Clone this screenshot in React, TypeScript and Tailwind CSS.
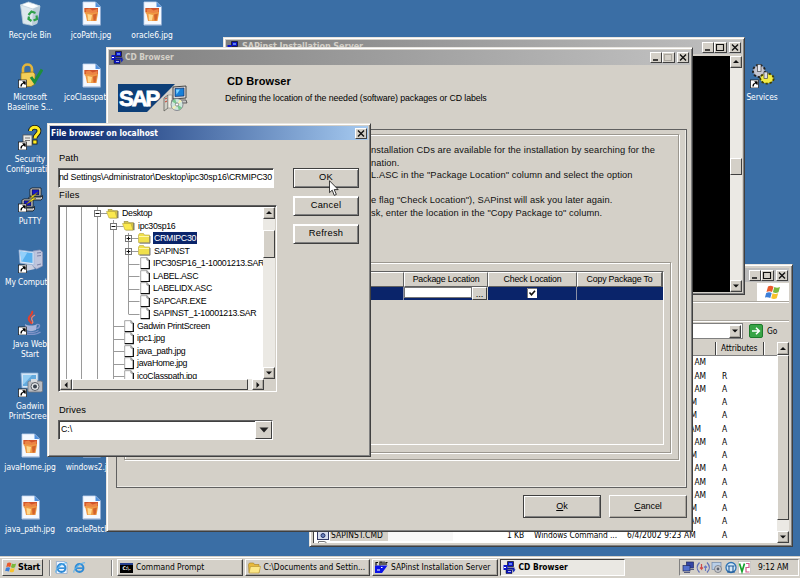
import React from "react";

const UI = "font-['DejaVu_Sans_Condensed','Noto_Sans',sans-serif] text-[8.4px] tracking-[-0.07px]";
const JAVA = "font-['Liberation_Sans',Arial,sans-serif] text-[9.3px]";
const RAISED = "border border-t-white border-l-white border-b-[#404040] border-r-[#404040] bg-[#d4d0c8]";
const ETCHED = "border border-[#9b978f] shadow-[1px_1px_0_#fff,inset_1px_1px_0_#fff]";

/* ---------- icons ---------- */

const Shortcut = () => (
  <g>
    <rect x="0.5" y="17" width="8" height="8" fill="#fff" stroke="#111" strokeWidth="0.7" />
    <path d="M2.4 23.6c0-2.4.9-3.5 2.6-3.6v-1.5h2.4v3.1h-1v-1.1c-1.700.1-2.600 1.200-2.600 3.100z" fill="#000" />
    <path d="M4 18.500h3.500V22z" fill="#000" />
  </g>
);

const JpgIcon = () => (
  <svg viewBox="0 0 25 25" className="size-[25px]">
    <path d="M4 1h12.500l5 5v18H4z" fill="#f5f9ff" stroke="#c3d6f0" strokeWidth="0.8" />
    <path d="M16.500 1l5 5h-5z" fill="#4f8fdc" />
    <path d="M21.500 6v18H4.500" fill="none" stroke="#88a5cc" strokeWidth="0.8" />
    <path d="M5.500 7h13.500v5l-1.500 8H8L6.500 13l-1-1z" fill="#ef9a45" />
    <path d="M5.500 7H19v4H5.500z" fill="#d0532c" />
    <path d="M6.500 8.500l4-1 3 2 5-1.500v3l-5 1-6.500-1z" fill="#ec8444" />
    <path d="M8.500 13l4.500 1-1 5.500H9z" fill="#ffd98c" />
    <path d="M14 13.500l4-1-1.500 7h-2z" fill="#d4632c" />
  </svg>
);

const RecycleIcon = () => (
  <svg viewBox="0 0 25 25" className="size-[25px]">
    <path d="M2.500 4l19.500 1-3 17.500-5 2-9-2z" fill="#dde8ee" stroke="#b6c9d6" strokeWidth="0.8" />
    <path d="M2.500 4l8-3 11.500 4-7 3z" fill="#f7fbfd" stroke="#c2d0da" strokeWidth="0.800" />
    <path d="M15 8l7-3-3 17.500-5 2z" fill="#bccdd8" />
    <path d="M5 3.500l5-1.500 3 2 3-1 2 2-4 2z" fill="#fff" />
    <path d="M10.500 14l3-3.500 4 1.500M18.500 14.500l.5 3.500-3.500 1.500M13.500 20l-3-2 .500-2.500" fill="none" stroke="#2fa04a" strokeWidth="2.200" />
  </svg>
);

const BaselineIcon = () => (
  <svg viewBox="0 0 25 25" className="size-[25px]">
    <path d="M5 11V6c0-6 9-6 9 0v5" fill="none" stroke="#e3b53b" strokeWidth="2.600" />
    <path d="M3 10l12-1 2 2v10l-4 2.500H3z" fill="#f3cf58" stroke="#9a7719" strokeWidth="0.700" />
    <path d="M13 14l3.500 5L24 6.500" fill="none" stroke="#1e8d3b" strokeWidth="3" />
    <Shortcut />
  </svg>
);

const SecurityIcon = () => (
  <svg viewBox="0 0 25 25" className="size-[25px]">
    <rect x="5" y="10" width="9" height="11" fill="#e9e9e4" stroke="#555" strokeWidth="0.800" />
    <path d="M7 13h5M7 15.500h5" stroke="#777" />
    <path d="M12.500 6c0-5 8.500-5 8.500 0 0 3.500-4 3.500-4 7.500" fill="none" stroke="#111" strokeWidth="4.600" />
    <path d="M12.500 6c0-5 8.500-5 8.500 0 0 3.500-4 3.500-4 7.500" fill="none" stroke="#ffed21" strokeWidth="3" />
    <rect x="14.800" y="15" width="4.200" height="4" fill="#ffed21" stroke="#111" strokeWidth="0.800" />
    <Shortcut />
  </svg>
);

const Pc = ({ x, y }: { x: number; y: number }) => (
  <g transform={`translate(${x} ${y})`}>
    <path d="M0 1l2-1h9v8H0z" fill="#d6d6d6" stroke="#111" strokeWidth="0.800" />
    <rect x="2" y="1.800" width="7" height="5" fill="#1616c8" stroke="#111" strokeWidth="0.600" />
    <path d="M-1 9h12l1.500-1.500v3L11 12H-1z" fill="#c3c3c3" stroke="#111" strokeWidth="0.800" />
  </g>
);

const PuttyIcon = () => (
  <svg viewBox="0 0 25 25" className="size-[25px]">
    <Pc x={12} y={1} />
    <Pc x={4} y={12} />
    <path d="M20 5l-8 5.500 3 .500-8 7 11-6.500-3.500-.5z" fill="#ffe928" stroke="#5e5600" strokeWidth="0.500" />
    <Shortcut />
  </svg>
);

const ComputerIcon = () => (
  <svg viewBox="0 0 25 25" className="size-[25px]">
    <path d="M15 3l7-1 2.500 2v14l-6 3-4-3z" fill="#bfc5dc" stroke="#9097b8" strokeWidth="0.700" />
    <path d="M19 5l4-.500M19 8l4-.500M19 17l4-1" stroke="#7b82a8" />
    <path d="M1 2l15 2v13L2 15z" fill="#d7e4f5" stroke="#9eb6d8" strokeWidth="0.700" />
    <path d="M2.300 3.500l12.200 1.600v10L3.300 13.500z" fill="#57b0ee" />
    <path d="M2.300 3.500l7 1-5 8.500-1 .500z" fill="#93d0fa" />
    <path d="M7 16l7 1 3 4-9 2-3-3z" fill="#c9cfdf" />
    <Shortcut />
  </svg>
);

const JavaIcon = () => (
  <svg viewBox="0 0 25 25" className="size-[25px]">
    <path d="M14 1c2 4-5 5-3 9 1 2 3 2 2 4" fill="none" stroke="#e0402e" strokeWidth="2" />
    <path d="M17 5c-4 2-4 4-2.500 6 1 1.500-.5 2.500-.5 2.500" fill="none" stroke="#f0816c" strokeWidth="1.300" />
    <path d="M7 14c3 2 9 2 12 0l-1 6c-3 1.500-7 1.500-10 0z" fill="#a8b5db" />
    <path d="M19 14.500c4-1 3 4-1 4M6 20.500c5 3 11 2.500 14.500 0M8 24c6 1 11 .500 14.500-2" fill="none" stroke="#8193c8" strokeWidth="1.400" />
    <Shortcut />
  </svg>
);

const GadwinIcon = () => (
  <svg viewBox="0 0 25 25" className="size-[25px]">
    <path d="M3 1h17v15H4z" fill="#d5e6f7" stroke="#83a9cf" strokeWidth="0.800" />
    <path d="M5 3h13v11H5z" fill="#63aade" />
    <path d="M5 3h9l-8 9H5z" fill="#94cdf2" />
    <rect x="10" y="9" width="14.500" height="11" rx="1.500" fill="#b9bcc2" stroke="#70747c" strokeWidth="0.800" />
    <rect x="13" y="7" width="6" height="3" fill="#d7dade" />
    <circle cx="17" cy="14.500" r="4" fill="#e4e7ea" stroke="#5d6168" />
    <circle cx="17" cy="14.500" r="2" fill="#39424e" />
    <Shortcut />
  </svg>
);

const ServicesIcon = () => (
  <svg viewBox="0 0 25 25" className="size-[25px]">
    <circle cx="9" cy="8" r="6" fill="#a9a9b4" stroke="#222" strokeWidth="2" strokeDasharray="2.300 1.800" />
    <circle cx="9" cy="8" r="4.800" fill="#c6c6d0" />
    <rect x="7.500" y="1.500" width="3.500" height="7" fill="#e8e8ee" stroke="#444" strokeWidth="0.700" />
    <ellipse cx="17" cy="15.500" rx="6.600" ry="5" fill="#e8e238" stroke="#444000" strokeWidth="2" strokeDasharray="2.300 1.800" />
    <ellipse cx="17" cy="15.500" rx="5.600" ry="4" fill="#f2ec45" />
    <rect x="14" y="9" width="3.600" height="6.500" fill="#dedee4" stroke="#444" strokeWidth="0.700" />
    <Shortcut />
  </svg>
);

const SapinstIcon = () => (
  <svg viewBox="0 0 13 13" className="size-[13px] shrink-0">
    <path d="M4.500 0.500h6v5h-6z" fill="#0a14c8" stroke="#111" strokeWidth="0.700" />
    <path d="M6 2h3v2H6z" fill="#5c7cf0" />
    <path d="M3.500 6.500h8v2h-8z" fill="#111a90" />
    <path d="M0.500 4h4v5h-4z" fill="#0a14c8" />
    <path d="M1 6h2v1H1z" fill="#fff" />
    <path d="M3 9h6v3.500H3z" fill="#0a14c8" stroke="#111" strokeWidth="0.500" />
    <path d="M9 7.500l3.500 1-2 3z" fill="#1b2bb8" />
    <path d="M5 10.500h3" stroke="#cfd6ff" strokeWidth="0.800" />
  </svg>
);

const SapTaskIcon = () => (
  <svg viewBox="0 0 13 13" className="size-[13px] shrink-0">
    <path d="M0 4.500h12.500L7 12H0z" fill="#0b12e8" />
    <path d="M1 4.500V1.500h2M5 4.500V1h2v3M9 4V0.500M11 4V1.500h1.500" fill="none" stroke="#111" strokeWidth="1.200" />
    <path d="M2 9h3M6 6.500h1.500" stroke="#fff" />
  </svg>
);

const SetupIcon = () => (
  <svg viewBox="0 0 25 27" className="h-[27px] w-[25px]">
    <path d="M1 13l4-3v13l-4 3z" fill="#d0cfc6" stroke="#55554f" strokeWidth="0.700" />
    <path d="M5 10h4v13H5z" fill="#f2efe4" stroke="#777" strokeWidth="0.500" />
    <path d="M2 14l2-1M2 17l2-1" stroke="#cc3a2a" />
    <path d="M10 2l13-1v12l-13 1z" fill="#d9d9d9" stroke="#222" strokeWidth="0.800" />
    <path d="M12 3.500l9-.5v8l-9 .5z" fill="#1780d8" stroke="#0b1f58" strokeWidth="0.600" />
    <path d="M13 4.500h4l-3.500 5z" fill="#7ed3ff" />
    <path d="M9 15h14l1 3H9z" fill="#c6c6c6" stroke="#333" strokeWidth="0.700" />
    <circle cx="14" cy="19.500" r="6" fill="#cfe6dc" stroke="#667" strokeWidth="0.700" />
    <path d="M14 19.500l-5-3 3-3zM14 19.500l5 3-3 3z" fill="#79c68e" />
    <path d="M14 19.500l-5 3 2 2zM14 19.500l5-3-2-2z" fill="#f5f0b4" />
    <circle cx="14" cy="19.500" r="1.600" fill="#fff" stroke="#555" strokeWidth="0.600" />
  </svg>
);

const Flag = ({ className }: { className: string }) => (
  <svg viewBox="0 0 16 15" className={className}>
    <path d="M3 1.500c2-1.200 3.500-1 5.500.2L7 7C5 6 3.700 6 1.500 7z" fill="#ea5a2b" />
    <path d="M9.300 2c2 1 3.500 1 5.700 0l-1.500 5.300c-2 1-3.700.9-5.600 0z" fill="#79b83b" />
    <path d="M1.200 8c2-1 3.700-1 5.500 0l-1.400 5C3.500 12-.1 12-.2 13z" fill="#3c7fd8" />
    <path d="M7.600 8.300c2 1 3.500.9 5.600 0L11.700 13.300c-2 1-3.700.9-5.500 0z" fill="#f8c32c" />
  </svg>
);

const Folder = () => (
  <svg viewBox="0 0 13 11" className="h-[11px] w-[13px] shrink-0">
    <path d="M0.500 2l1-1.500h4L6.500 2h5v7.500H0.500z" fill="#f0e04c" stroke="#b5a53c" strokeWidth="0.600" />
    <path d="M1 3.500h10" stroke="#fff8ab" />
    <path d="M12 3v7.200H1.500" fill="none" stroke="#555" strokeWidth="0.800" />
  </svg>
);

const OpenFolder = () => (
  <svg viewBox="0 0 13 11" className="h-[11px] w-[13px] shrink-0">
    <path d="M2 1.500h4l1 1.200h4.500V10H4z" fill="#d2c24a" stroke="#8c7f2c" strokeWidth="0.600" />
    <path d="M0.500 3.500h8.500l2 6.500H3z" fill="#fbe94e" stroke="#b5a53c" strokeWidth="0.600" />
    <path d="M12 3v7.200" stroke="#555" strokeWidth="0.800" />
  </svg>
);

const Page = () => (
  <svg viewBox="0 0 11 13" className="h-[12.500px] w-[11px] shrink-0">
    <path d="M0.500 12V0.700h6.500L9.500 3.200" fill="#fff" stroke="#8b8b8b" strokeWidth="0.800" />
    <path d="M7 0.700v2.500h2.500" fill="none" stroke="#555" strokeWidth="0.700" />
    <path d="M9.500 3v9.200H0.500" fill="none" stroke="#111" strokeWidth="1.300" />
  </svg>
);

/* ---------- small controls ---------- */

type Dir = "up" | "down" | "left" | "right";
const ARROWS: Record<Dir, string> = {
  up: "M1 5h6L4 2z",
  down: "M1 2.500h6L4 5.500z",
  left: "M5.500 1v6L2.500 4z",
  right: "M2.500 1v6L5.500 4z",
};
const ArrowBtn = ({ dir, className }: { dir: Dir; className: string }) => (
  <div className={`${RAISED} flex shrink-0 items-center justify-center shadow-[inset_-1px_-1px_0_#aaa69e] ${className}`}>
    <svg viewBox="0 0 8 8" className="size-[8px]">
      <path d={ARROWS[dir]} fill="#111" />
    </svg>
  </div>
);

const TitleBtn = ({ kind, dim }: { kind: "min" | "max" | "close"; dim?: boolean }) => (
  <div className={`${RAISED} flex h-[11px] w-[12.500px] items-center justify-center`}>
    <svg viewBox="0 0 10 9" className="h-[9px] w-[10px]" fill="none" stroke={dim ? "#aaa69e" : "#111"}>
      {kind === "min" && <path d="M2 7h5" strokeWidth="1.500" />}
      {kind === "max" && <path d="M1.500 1v6.500h7V1M1 1.500h8" strokeWidth="1.100" />}
      {kind === "close" && <path d="M2 1.500l6 6M8 1.500l-6 6" strokeWidth="1.400" />}
    </svg>
  </div>
);

const WinButtons = ({ dimMax }: { dimMax?: boolean }) => (
  <div className="ml-auto flex items-center">
    <TitleBtn kind="min" />
    <TitleBtn kind="max" dim={dimMax} />
    <div className="w-[2px]" />
    <TitleBtn kind="close" />
  </div>
);

const FRAME = "absolute border border-t-[#e8e5df] border-l-[#e8e5df] border-b-[#404040] border-r-[#404040] bg-[#d4d0c8] shadow-[inset_1px_1px_0_#fff,inset_-1px_-1px_0_#808080]";

/* ---------- desktop ---------- */

const DeskIcon = ({ place, icon, label }: { place: string; icon: React.ReactNode; label: string[] }) => (
  <div className={`absolute flex w-[70px] flex-col items-center ${place}`}>
    {icon}
    <div className={`${UI} mt-[3.500px] text-center leading-[10px] whitespace-nowrap text-white`}>
      {label.map((l) => (
        <div key={l}>{l}</div>
      ))}
    </div>
  </div>
);

/* ---------- background windows ---------- */

const ConsoleWindow = () => (
  <div className={`${FRAME} top-[37px] left-[223px] flex h-[258px] w-[522px] flex-col p-[2px]`}>
    <div className={`${UI} flex h-[14px] items-center bg-linear-to-r from-[#808080] to-[#c0c0c0] pr-[1px] pl-px font-bold text-[#d4d0c8]`}>
      <SapinstIcon />
      <span className="ml-[2px] text-[9px]">SAPinst Installation Server</span>
      <WinButtons />
    </div>
    <div className="mt-[2px] flex min-h-0 flex-1 bg-black">
      <div className="flex-1" />
      <div className="flex w-[12.500px] flex-col bg-[#ebe9e4]">
        <ArrowBtn dir="up" className="h-[12px]" />
        <div className="h-[90px]" />
        <div className={`${RAISED} h-[17px]`} />
        <div className="flex-1" />
        <ArrowBtn dir="down" className="h-[12px]" />
      </div>
    </div>
  </div>
);

const FILE_ROWS: [string, string][] = [
  ["pr-[10px]", ""], ["pr-[10px]", "R"], ["pr-[10px]", "A"], ["pr-[19px]", "A"], ["pr-[19px]", "A"],
  ["pr-[15px]", "A"], ["pr-[10px]", "A"], ["pr-[19px]", "A"], ["pr-[10px]", "A"], ["pr-[10px]", "A"],
  ["pr-[10px]", "A"], ["pr-[19px]", "A"], ["pr-[15px]", "A"],
];

const ExplorerWindow = () => (
  <div className={`${FRAME} top-[264px] left-[309px] flex h-[283px] w-[484px] flex-col p-[3px] ${UI}`}>
    <div className="flex h-[14px] items-center bg-linear-to-r from-[#808080] to-[#c0c0c0] pr-[1px]">
      <WinButtons />
    </div>
    <div className="flex h-[20px] justify-end border-b border-[#aaa69e] pt-[1px]">
      <div className="flex w-[32px] items-center justify-center bg-white">
        <Flag className="h-[15px] w-[16px]" />
      </div>
    </div>
    <div className="h-[19px] border-t border-b border-t-white border-b-[#aaa69e]" />
    <div className="flex h-[19px] items-center border-t border-t-white">
      <div className="flex h-[16px] w-[430px] items-center justify-end border border-[#808080] bg-white p-px">
        <ArrowBtn dir="down" className="h-[13px] w-[12px]" />
      </div>
      <div className="ml-[6px] flex size-[14px] items-center justify-center rounded-[2px] border border-[#1c7a2b] bg-[#38a446]">
        <svg viewBox="0 0 10 10" className="size-[10px]">
          <path d="M1 5h7M5 1.800L8.300 5 5 8.200" fill="none" stroke="#fff" strokeWidth="1.600" />
        </svg>
      </div>
      <span className="ml-[4px]">Go</span>
    </div>
    <div className="mt-[2px] flex min-h-0 flex-1 border-l border-[#404040]">
      <div className="flex min-w-0 flex-1 flex-col overflow-hidden bg-white">
        <div className="flex h-[14px] shrink-0 items-center border-b border-[#808080] bg-[#d4d0c8]">
          <div className="h-full w-[402px] border-r border-[#404040]" />
          <div className="flex h-full w-[48px] items-center border-r border-l border-r-[#404040] border-l-white pl-[4px]">Attributes</div>
          <div className="h-full flex-1 border-l border-white" />
        </div>
        {FILE_ROWS.map(([pad, attr], i) => (
          <div key={i} className="flex h-[13.250px] shrink-0 items-center leading-none">
            <div className={`w-[402px] text-right ${pad}`}>
              <span>AM</span>
            </div>
            <span className="pl-[6px]">{attr}</span>
          </div>
        ))}
        <div className="flex h-[13px] shrink-0 items-center leading-none whitespace-nowrap">
          <svg viewBox="0 0 12 11" className="ml-[3px] h-[11px] w-[12px] shrink-0">
            <rect x="0.500" y="0.500" width="11" height="10" fill="#d5dcec" stroke="#333a66" />
            <rect x="1" y="1" width="10" height="2" fill="#27408f" />
            <circle cx="6" cy="6.500" r="2" fill="#6c83ba" stroke="#223067" />
          </svg>
          <div className="ml-px flex h-full w-[58px] items-center bg-[#d4d0c8] pl-px tracking-[0.100px]">SAPINST.CMD</div>
          <div className="h-full w-[65px] bg-[#f7f7f7]" />
          <div className="w-[71px] text-right">1 KB</div>
          <div className="w-[93px] pl-[10px]">Windows Command ...</div>
          <div className="w-[99px] pl-[10px] tracking-[0.100px]">6/4/2002 9:23 AM</div>
          <span className="pl-[6px]">A</span>
        </div>
        <div className="ml-[4px] h-[10px] w-[9px] shrink-0 rounded-tr-[3px] border border-[#777]" />
      </div>
      <div className="flex w-[12.500px] flex-col bg-[#ebe9e4]">
        <ArrowBtn dir="up" className="h-[13px]" />
        <div className={`${RAISED} h-[165px]`} />
        <div className="flex-1" />
        <ArrowBtn dir="down" className="h-[12px]" />
      </div>
    </div>
  </div>
);

/* ---------- CD Browser ---------- */

const INTRO = [
  "nstallation CDs are available for the installation by searching for the",
  "nation.",
  "L.ASC in the \"Package Location\" column and select the option",
  "",
  "e flag \"Check Location\"), SAPinst will ask you later again.",
  "sk, enter the location in the \"Copy Package to\" column.",
];

const HeadCell = ({ className, children }: { className: string; children?: React.ReactNode }) => (
  <div className={`flex h-full items-center justify-center border border-t-white border-l-white border-b-[#606060] border-r-[#606060] text-[8.800px] tracking-[-0.200px] ${className}`}>
    {children}
  </div>
);

const CdBrowser = () => (
  <div className={`${FRAME} top-[47px] left-[106px] flex h-[485px] w-[587px] flex-col p-[2px] ${JAVA}`}>
    <div className={`${UI} flex h-[15px] shrink-0 items-center bg-linear-to-r from-[#808080] to-[#c0c0c0] pr-[1px] pl-[2px] font-bold text-[#d4d0c8]`}>
      <SapinstIcon />
      <span className="ml-[1px] text-[8.400px]">CD Browser</span>
      <WinButtons dimMax />
    </div>
    <div className="flex h-[64px] shrink-0 pt-[8px] pl-[9px]">
      <div className="relative mt-[11px] h-[28px] w-[45px]">
        <svg viewBox="0 0 57 28" className="absolute top-0 left-0 h-[28px] w-[57px]">
          <path d="M0 0h57L29 28H0z" fill="#0d3f78" />
        </svg>
        <span className="absolute top-[3px] left-px text-[22px] leading-[24px] font-bold tracking-[-2px] text-white [-webkit-text-stroke:0.8px_white]">SAP</span>
      </div>
      <div className="relative mt-[12px] w-[25px]">
        <SetupIcon />
      </div>
      <div className="ml-[37px] flex flex-col text-black">
        <div className="ml-[2px] text-[11px] leading-[17px] font-bold tracking-[0.100px]">CD Browser</div>
        <div className="mt-[2px] text-[8.800px] leading-[13px] tracking-[-0.100px] whitespace-nowrap">Defining the location of the needed (software) packages or CD labels</div>
      </div>
    </div>
    <div className="mr-[3px] ml-[7px] flex h-[359px] shrink-0 flex-col border border-[#606060] pt-[4px] pr-[7px] pb-[27px] pl-[7px] shadow-[inset_-1px_-1px_0_#eceae5]">
      <div className={`flex flex-1 flex-col pt-[9px] pr-[7px] pb-[6px] pl-[7px] ${ETCHED}`}>
        <div className="h-[118px] pl-[239px] tracking-[0.090px]">
          {INTRO.map((l, i) => (
            <div key={i} className="h-[12.500px] leading-[12.500px] whitespace-nowrap text-[#111]">{l}</div>
          ))}
        </div>
        <div className={`flex flex-1 pt-[8px] pr-[6px] pb-[7px] pl-[6px] ${ETCHED}`}>
          <div className="flex flex-1 flex-col border border-t-[#606060] border-l-[#606060] border-r-white border-b-white">
            <div className="flex h-[15px] border-r border-[#606060]">
              <HeadCell className="flex-1" />
              <HeadCell className="w-[84px]">Package Location</HeadCell>
              <HeadCell className="w-[89px]">Check Location</HeadCell>
              <HeadCell className="w-[85px]">Copy Package To</HeadCell>
            </div>
            <div className="flex h-[12.500px] bg-[#0a246a]">
              <div className="flex-1 border-r border-[#8a8fa5]" />
              <div className="flex w-[84px] border-r border-[#d4d0c8]">
                <div className="h-[11px] w-[68px] border border-[#777] bg-white" />
                <div className="flex flex-1 items-end justify-center border border-t-white border-l-white border-b-[#404040] border-r-[#404040] bg-[#d4d0c8] leading-[9px]">...</div>
              </div>
              <div className="flex w-[89px] items-center justify-center border-r border-[#8a8fa5]">
                <svg viewBox="0 0 10 10" className="size-[10px]">
                  <rect width="10" height="10" fill="#fff" />
                  <path d="M0.500 10V0.500H10" fill="none" stroke="#777" />
                  <path d="M2.500 4.500l2 2.300L8 2.800" fill="none" stroke="#111" strokeWidth="1.600" />
                </svg>
              </div>
              <div className="w-[86px]" />
            </div>
          </div>
        </div>
      </div>
    </div>
    <div className="mt-[7px] flex justify-end gap-[8px] pr-[3px] text-[9px]">
      <div className="flex h-[23px] w-[78px] items-center justify-center border border-[#404040] shadow-[inset_1px_1px_0_#fff,inset_-1px_-1px_0_#808080]">
        <span><u>O</u>k</span>
      </div>
      <div className="flex h-[23px] w-[78px] items-center justify-center border border-t-white border-l-white border-b-[#505050] border-r-[#505050] shadow-[inset_-1px_-1px_0_#aaa69e]">
        <span className="tracking-[-0.100px]"><u>C</u>ancel</span>
      </div>
    </div>
  </div>
);

/* ---------- file browser ---------- */

type Node = { text: string; indent: string; kind: "open" | "closed" | "file"; selected?: boolean };
const NODES: Node[] = [
  { text: "Desktop", indent: "pl-[46px]", kind: "open" },
  { text: "ipc30sp16", indent: "pl-[62px]", kind: "open" },
  { text: "CRMIPC30", indent: "pl-[78px]", kind: "closed", selected: true },
  { text: "SAPINST", indent: "pl-[78px]", kind: "closed" },
  { text: "IPC30SP16_1-10001213.SAR", indent: "pl-[80px]", kind: "file" },
  { text: "LABEL.ASC", indent: "pl-[80px]", kind: "file" },
  { text: "LABELIDX.ASC", indent: "pl-[80px]", kind: "file" },
  { text: "SAPCAR.EXE", indent: "pl-[80px]", kind: "file" },
  { text: "SAPINST_1-10001213.SAR", indent: "pl-[80px]", kind: "file" },
  { text: "Gadwin PrintScreen", indent: "pl-[64px]", kind: "file" },
  { text: "ipc1.jpg", indent: "pl-[64px]", kind: "file" },
  { text: "java_path.jpg", indent: "pl-[64px]", kind: "file" },
  { text: "javaHome.jpg", indent: "pl-[64px]", kind: "file" },
  { text: "jcoClasspath.jpg", indent: "pl-[64px]", kind: "file" },
];

const LABEL_GAP: Record<Node["kind"], string> = {
  open: "ml-[3px] leading-[12px]",
  closed: "ml-[3px] leading-[12px]",
  file: "ml-[2px] leading-[12px]",
};

const Toggle = ({ x, y, plus }: { x: number; y: number; plus?: boolean }) => (
  <g stroke="#111">
    <rect x={x - 3} y={y - 3} width="6" height="6" fill="#fff" stroke="#777" />
    <path d={`M${x - 2} ${y}h4`} />
    {plus && <path d={`M${x} ${y - 2}v4`} />}
  </g>
);

const TreeLines = () => (
  <svg viewBox="0 0 204 173" className="absolute inset-0 h-[173px] w-[204px]" fill="none">
    <g stroke="#9a9a9a">
      <path d="M6.500 0v173M21.500 0v173M37.500 0v173M53.500 13v160M68.500 26v81" />
      <path d="M37.500 6.500h10M53.500 19.500h10M68.500 31.500h10M68.500 44.500h10M68.500 57.500h11M68.500 69.500h11M68.500 82.500h11M68.500 94.500h11M68.500 107.500h11" />
      <path d="M53.500 119.500h11M53.500 132.500h11M53.500 144.500h11M53.500 157.500h11M53.500 169.500h11" />
    </g>
    <Toggle x={37.500} y={6.500} />
    <Toggle x={53.500} y={19.500} />
    <Toggle x={68.500} y={31.500} plus />
    <Toggle x={68.500} y={44.500} plus />
  </svg>
);

const DialogBtn = ({ strong, children }: { strong?: boolean; children: React.ReactNode }) => (
  <div
    className={`flex h-[20px] w-[66px] items-center justify-center border text-[9.300px] tracking-[0.300px] shadow-[inset_1px_1px_0_#fff,inset_-1px_-1px_0_#808080] ${
      strong ? "border-[#404040]" : "border-t-white border-l-white border-b-[#404040] border-r-[#404040]"
    }`}
  >
    {children}
  </div>
);

const SUNK = "border border-t-[#606060] border-l-[#606060] border-r-white border-b-white shadow-[inset_1px_1px_0_#404040]";

const FileBrowser = () => (
  <div className={`${FRAME} top-[123px] left-[47px] flex h-[334px] w-[324px] flex-col p-[2px] ${JAVA}`}>
    <div className={`${UI} flex h-[14px] shrink-0 items-center bg-linear-to-r from-[#0a246a] to-[#a6caf0] pr-[1px] pl-px font-bold text-white`}>
      <span className="text-[8.400px] tracking-[0px]">File browser on localhost</span>
      <div className="ml-auto">
        <TitleBtn kind="close" />
      </div>
    </div>
    <div className="flex pl-[8px]">
      <div className="flex w-[219px] flex-col">
        <div className="mt-[11px] h-[14px] pl-px leading-[14px] tracking-[0.100px]">Path</div>
        <div className={`mt-[3px] flex h-[20px] w-[216px] items-center justify-end bg-white pr-px text-[8.800px] tracking-[-0.180px] whitespace-nowrap ${SUNK}`}>
          nd Settings\Administrator\Desktop\ipc30sp16\CRMIPC30
        </div>
        <div className="h-[17px] pl-px leading-[14px] tracking-[0.200px]">Files</div>
        <div className={`flex h-[187px] w-[219px] flex-col p-px ${SUNK}`}>
          <div className="flex h-[172px]">
            <div className="relative h-[172px] w-[204px] overflow-hidden bg-white text-[8.800px] tracking-[-0.300px]">
              <TreeLines />
              {NODES.map((n) => (
                <div key={n.text} className={`relative flex h-[12.500px] items-center whitespace-nowrap ${n.indent}`}>
                  {n.kind === "open" && <OpenFolder />}
                  {n.kind === "closed" && <Folder />}
                  {n.kind === "file" && <Page />}
                  <span className={n.selected ? "ml-[2px] bg-[#0a246a] px-px leading-[12px] text-white" : LABEL_GAP[n.kind]}>{n.text}</span>
                </div>
              ))}
            </div>
            <div className="flex w-[12px] flex-col bg-[#ebe9e4]">
              <ArrowBtn dir="up" className="h-[12px]" />
              <div className="h-[11px]" />
              <div className={`${RAISED} h-[28px]`} />
              <div className="flex-1" />
              <ArrowBtn dir="down" className="h-[12px]" />
            </div>
          </div>
          <div className="flex h-[12px] w-[204px] bg-[#ebe9e4]">
            <ArrowBtn dir="left" className="w-[12px]" />
            <div className={`${RAISED} w-[176px]`} />
            <div className="flex-1" />
            <ArrowBtn dir="right" className="w-[12px]" />
          </div>
        </div>
        <div className="mt-[11px] h-[14px] pl-px leading-[14px] tracking-[0.100px]">Drives</div>
        <div className={`mt-[3px] flex h-[20px] w-[215px] items-center bg-white pl-[2px] ${SUNK}`}>
          <span className="text-[8.800px]">C:\</span>
          <div className={`${RAISED} ml-auto flex h-full w-[17px] items-center justify-center`}>
            <svg viewBox="0 0 10 6" className="h-[6px] w-[10px]">
              <path d="M0.500 0.500h9L5 5.500z" fill="#222" />
            </svg>
          </div>
        </div>
      </div>
      <div className="mt-[28px] ml-[16px] flex flex-col gap-[8px]">
        <DialogBtn strong>OK</DialogBtn>
        <DialogBtn>Cancel</DialogBtn>
        <DialogBtn>Refresh</DialogBtn>
      </div>
    </div>
  </div>
);

/* ---------- taskbar ---------- */

const IeIcon = ({ page }: { page?: boolean }) => (
  <svg viewBox="0 0 14 14" className="size-[13px]">
    {page && <path d="M1.500 0.500h9l2.500 2.500v10.500H1.500z" fill="#eef5ff" stroke="#7c9dc8" strokeWidth="0.700" />}
    <circle cx="7" cy="7.500" r="4.200" fill="none" stroke="#2e8ad6" strokeWidth="2.200" />
    <path d="M3.500 7.700h7" stroke="#2e8ad6" strokeWidth="1.700" />
    <path d="M1 12.500C0 9 8 1.500 13 2" fill="none" stroke="#5ab3ec" strokeWidth="1.100" />
  </svg>
);

const TaskBtn = ({ icon, active, children }: { icon: React.ReactNode; active?: boolean; children: React.ReactNode }) => (
  <div
    className={`flex h-[17px] w-[125.500px] items-center gap-[3px] border pl-[2px] whitespace-nowrap ${
      active
        ? "border-t-[#404040] border-l-[#404040] border-r-white border-b-white bg-[#eae8e3] font-bold"
        : "border-t-white border-l-white border-b-[#404040] border-r-[#404040] shadow-[inset_-1px_-1px_0_#aaa69e]"
    }`}
  >
    {icon}
    <span className="tracking-[0px]">{children}</span>
  </div>
);

const TrayIcons = () => (
  <svg viewBox="0 0 69 13" className="h-[13px] w-[69px]">
    <rect x="4.500" y="1" width="7" height="6" fill="#3445a5" stroke="#222b62" strokeWidth="0.700" />
    <rect x="1" y="4.500" width="7" height="5.500" fill="#5470cd" stroke="#222b62" strokeWidth="0.700" />
    <path d="M2 11.500h6M8 8.500h4" stroke="#555c80" />
    <path d="M17.500 1.500c-3 3-3 7 0 10M25 1.500c3 3 3 7 0 10" fill="none" stroke="#5f6fb8" strokeWidth="1.300" />
    <path d="M19.500 3v5l-1.500-1.500M19.500 8l1.500-1.500" fill="none" stroke="#d04848" strokeWidth="1.200" />
    <path d="M23.500 10V5M22 6.500L23.500 5 25 6.500" fill="none" stroke="#6b7ac5" strokeWidth="1.100" />
    <rect x="30" y="1.500" width="9" height="7" fill="#b9cfe8" stroke="#7089ad" strokeWidth="0.700" />
    <circle cx="36" cy="8" r="3.500" fill="#c9ccd2" stroke="#71757e" strokeWidth="0.800" />
    <circle cx="36" cy="8" r="1.400" fill="#5a6270" />
    <circle cx="49" cy="6.500" r="5" fill="#d6e8f7" stroke="#2d73b5" strokeWidth="1.300" />
    <path d="M45.500 5h7M47 5v6M51 5v6M45 11h8" stroke="#215b98" strokeWidth="1.100" />
    <rect x="56.500" y="0.500" width="12" height="12" fill="#fff" stroke="#aaa" strokeWidth="0.500" />
    <path d="M57.500 2.500l2.500 8 2.500-8" fill="none" stroke="#18a02d" strokeWidth="1.700" />
    <path d="M64 2.500h3v4h-3v4.500h3.500" fill="none" stroke="#d15a8b" strokeWidth="1.200" />
  </svg>
);

const Taskbar = () => (
  <div className={`${UI} absolute top-[556px] left-0 flex h-[22px] w-[800px] items-center border-t border-[#d4d0c8] bg-[#d4d0c8] pl-[2px] shadow-[inset_0_1px_0_#fff]`}>
    <div className={`${RAISED} flex h-[17px] w-[41px] items-center gap-px pl-[2px] text-[9px] font-bold`}>
      <Flag className="h-[11px] w-[12px]" />
      <span className="tracking-[-0.200px]">Start</span>
    </div>
    <div className="ml-[6px] h-[16px] w-[2px] border-r border-l border-r-white border-l-[#808080]" />
    <div className="ml-[4px] flex gap-[5px]">
      <IeIcon page />
      <IeIcon />
    </div>
    <div className="ml-[25px] h-[16px] w-[2px] border-r border-l border-r-white border-l-[#808080]" />
    <div className="ml-[4px] flex gap-[2px]">
      <TaskBtn
        icon={
          <div className="flex h-[10px] w-[13px] shrink-0 items-center justify-center border-t-2 border-[#27408f] bg-black text-[5px] leading-none font-bold text-white">C:\.</div>
        }
      >
        Command Prompt
      </TaskBtn>
      <TaskBtn
        icon={
          <svg viewBox="0 0 13 12" className="h-[12px] w-[13px] shrink-0">
            <path d="M0.500 2.500l1-1.500h4l1 1.500H11v8H1z" fill="#e7b93c" stroke="#a27c1c" strokeWidth="0.600" />
            <path d="M2.500 4.500h10l-1.500 6.500H1z" fill="#fce786" stroke="#b48e2b" strokeWidth="0.600" />
          </svg>
        }
      >
        C:\Documents and Settin...
      </TaskBtn>
      <TaskBtn icon={<SapTaskIcon />}>SAPinst Installation Server</TaskBtn>
      <TaskBtn icon={<SapinstIcon />} active>CD Browser</TaskBtn>
    </div>
    <div className="mr-[1px] ml-auto flex h-[17px] w-[120px] items-center border border-t-[#808080] border-l-[#808080] border-r-white border-b-white pl-[2px]">
      <TrayIcons />
      <span className="ml-[7px]">9:12 AM</span>
    </div>
  </div>
);

export default function App() {
  return (
    <div className="relative h-[578px] w-[800px] overflow-hidden bg-[#3a6ea5] text-black">
      <DeskIcon place="top-[1px] left-[-5px]" icon={<RecycleIcon />} label={["Recycle Bin"]} />
      <DeskIcon place="top-[1px] left-[56px]" icon={<JpgIcon />} label={["jcoPath.jpg"]} />
      <DeskIcon place="top-[1px] left-[117px]" icon={<JpgIcon />} label={["oracle6.jpg"]} />
      <DeskIcon place="top-[63px] left-[-5px]" icon={<BaselineIcon />} label={["Microsoft", "Baseline S..."]} />
      <DeskIcon place="top-[63px] left-[56px]" icon={<JpgIcon />} label={["jcoClasspath..."]} />
      <DeskIcon place="top-[125px] left-[-5px]" icon={<SecurityIcon />} label={["Security", "Configurati..."]} />
      <DeskIcon place="top-[187px] left-[-5px]" icon={<PuttyIcon />} label={["PuTTY"]} />
      <DeskIcon place="top-[248px] left-[-5px]" icon={<ComputerIcon />} label={["My Computer"]} />
      <DeskIcon place="top-[310px] left-[-5px]" icon={<JavaIcon />} label={["Java Web", "Start"]} />
      <DeskIcon place="top-[372px] left-[-5px]" icon={<GadwinIcon />} label={["Gadwin", "PrintScreen"]} />
      <DeskIcon place="top-[433px] left-[-5px]" icon={<JpgIcon />} label={["javaHome.jpg"]} />
      <DeskIcon place="top-[433px] left-[56px]" icon={<JpgIcon />} label={["windows2.jpg"]} />
      <DeskIcon place="top-[495px] left-[-5px]" icon={<JpgIcon />} label={["java_path.jpg"]} />
      <DeskIcon place="top-[63px] left-[727px]" icon={<ServicesIcon />} label={["Services"]} />
      <ExplorerWindow />
      <ConsoleWindow />
      <DeskIcon place="top-[495px] left-[56px]" icon={<JpgIcon />} label={["oraclePatch..."]} />
      <CdBrowser />
      <FileBrowser />
      <Taskbar />
      <svg viewBox="0 0 12 18" className="absolute top-[180px] left-[329px] h-[17px] w-[11px]">
        <path d="M0.500 0.500v13l3-2.700 2.200 5.700 2.300-1-2.300-5.300h4.300z" fill="#fff" stroke="#111" strokeWidth="0.900" />
      </svg>
    </div>
  );
}
